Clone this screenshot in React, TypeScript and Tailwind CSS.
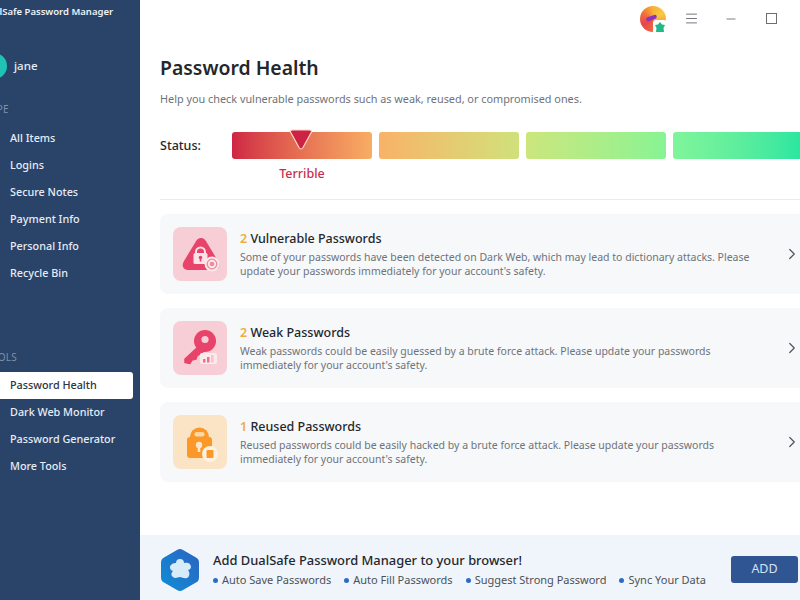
import { ChevronRight, Menu, Minus } from "lucide-react";

const typeItems = ["All Items", "Logins", "Secure Notes", "Payment Info", "Personal Info", "Recycle Bin"];
const toolItems = ["Password Health", "Dark Web Monitor", "Password Generator", "More Tools"];

function VulnerableIcon() {
  return (
    <svg width="54" height="54" viewBox="0 0 54 54">
      <path d="M28 11 C30.5 11 32 12.5 33.5 15 L45 34 C48 39.5 45.5 43 40 43 L16 43 C10.5 43 8 39.5 11 34 L22.5 15 C24 12.5 25.5 11 28 11Z" fill="#e8436a" />
      <path d="M23 27 v-2 a4.5 4.5 0 0 1 9 0 v2" fill="none" stroke="#fbe3e7" strokeWidth="2" />
      <rect x="20.5" y="26" width="14" height="11" rx="1.5" fill="#fbe3e7" />
      <circle cx="27.5" cy="30.5" r="1.8" fill="#e8436a" />
      <rect x="26.7" y="31" width="1.6" height="3.5" fill="#e8436a" />
      <circle cx="39" cy="37" r="7.5" fill="#fbe9ec" />
      <circle cx="39" cy="37" r="4.8" fill="none" stroke="#ee8a9d" strokeWidth="1.3" />
      <circle cx="39" cy="37" r="2.3" fill="#ee8a9d" />
    </svg>
  );
}

function WeakIcon() {
  return (
    <svg width="54" height="54" viewBox="0 0 54 54">
      <circle cx="32" cy="20" r="11" fill="#e8436a" />
      <circle cx="32" cy="18.5" r="3.6" fill="#f8ced6" />
      <path d="M25 26 L12 38 L12 41.5 L17 42.5 L19 39 L23 38 L24 35 L31 30Z" fill="#e8436a" stroke="#e8436a" strokeWidth="1.5" strokeLinejoin="round" />
      <rect x="27" y="32" width="17" height="11" rx="2" fill="#fbe9ec" />
      <rect x="30" y="38" width="2.5" height="3.5" fill="#ee6f88" />
      <rect x="34" y="36" width="2.5" height="5.5" fill="#ee6f88" />
      <rect x="38" y="34" width="2.5" height="7.5" fill="#f6c3cd" />
    </svg>
  );
}

function ReusedIcon() {
  return (
    <svg width="54" height="54" viewBox="0 0 54 54">
      <path d="M17 24 v-2 a9.5 9.5 0 0 1 19 0 v2Z" fill="#fb9827" />
      <rect x="21.5" y="17" width="10" height="4.5" rx="2.2" fill="#fcd9a6" />
      <rect x="14" y="22" width="25" height="21" rx="3" fill="#fb9827" />
      <circle cx="26" cy="30" r="3.2" fill="#fde6c8" />
      <rect x="24.7" y="31" width="2.6" height="6" fill="#fde6c8" />
      <circle cx="37" cy="39" r="8" fill="#fdf1df" />
      <rect x="33.5" y="35" width="7" height="8" rx="1" fill="#fb9827" />
    </svg>
  );
}

const issues = [
  {
    count: "2",
    title: "Vulnerable Passwords",
    desc: "Some of your passwords have been detected on Dark Web, which may lead to dictionary attacks. Please update your passwords immediately for your account's safety.",
    tile: "bg-[#f8ced6]",
    icon: <VulnerableIcon />,
  },
  {
    count: "2",
    title: "Weak Passwords",
    desc: "Weak passwords could be easily guessed by a brute force attack. Please update your passwords immediately for your account's safety.",
    tile: "bg-[#f8ced6]",
    icon: <WeakIcon />,
  },
  {
    count: "1",
    title: "Reused Passwords",
    desc: "Reused passwords could be easily hacked by a brute force attack. Please update your passwords immediately for your account's safety.",
    tile: "bg-[#fbe3c6]",
    icon: <ReusedIcon />,
  },
];

const segments = [
  "bg-gradient-to-r from-[#cf2544] to-[#f8ad63]",
  "bg-gradient-to-r from-[#f8b267] to-[#cfe17b]",
  "bg-gradient-to-r from-[#cbe67d] to-[#86f493]",
  "bg-gradient-to-r from-[#80f59a] to-[#12e5a0]",
];

const perks = ["Auto Save Passwords", "Auto Fill Passwords", "Suggest Strong Password", "Sync Your Data"];

export default function App() {
  return (
    <div className="flex h-[600px] w-[800px] overflow-hidden bg-white font-['Noto_Sans','Open_Sans',sans-serif] text-[#24272c]">
      <aside className="flex w-[140px] shrink-0 flex-col overflow-hidden bg-[#2a4368] text-[#e6ecf5]">
        <div className="-ml-[19px] mt-[3px] whitespace-nowrap text-[9.5px] font-semibold leading-[18px] text-[#eef2f8]">DualSafe Password Manager</div>
        <div className="mt-[32px] flex h-[26px] items-center">
          <div className="-ml-[19px] h-[26px] w-[26px] rounded-full bg-[#1ec3b4]" />
          <span className="ml-[7px] text-[11.5px] font-medium leading-none">jane</span>
        </div>
        <div className="-ml-[15px] mt-[23px] text-[10px] leading-[14px] tracking-wide text-[#7f90aa]">TYPE</div>
        <nav className="mt-[9px] flex flex-col">
          {typeItems.map((item) => (
            <div key={item} className="flex h-[27px] items-center pl-[10px] text-[10.8px] font-medium">{item}</div>
          ))}
        </nav>
        <div className="-ml-[16px] mt-[63px] text-[10px] leading-[14px] tracking-wide text-[#7f90aa]">TOOLS</div>
        <nav className="mt-[8px] flex flex-col">
          {toolItems.map((item, i) => (
            <div
              key={item}
              className={
                i === 0
                  ? "mr-[7px] flex h-[27px] items-center rounded-r-[3px] bg-white pl-[10px] text-[10.8px] font-medium text-[#2b3442]"
                  : "flex h-[27px] items-center pl-[10px] text-[10.8px] font-medium"
              }
            >
              {item}
            </div>
          ))}
        </nav>
      </aside>

      <main className="flex min-w-0 flex-1 flex-col overflow-hidden">
        <div className="flex h-[37px] shrink-0 items-center justify-end">
          <div className="relative mr-[18px] mt-[1px] h-[26px] w-[26px] rounded-full bg-[conic-gradient(#f9b233,#f8c846,#f59a2e,#f0683a,#e8434f,#f0703a,#f9b233)]">
            <div className="absolute left-[6px] top-[10px] h-[4px] w-[11px] -rotate-[20deg] rounded-full bg-[#8a32c4]" />
            <div className="absolute -bottom-[2px] -right-[1px] flex h-[14px] w-[14px] items-center justify-center rounded-[3px] bg-white">
              <svg width="12" height="12" viewBox="0 0 12 12">
                <path d="M6 1 L8 3.5 L11 4 L9.5 7 L10 11 L2 11 L2.5 7 L1 4 L4 3.5Z" fill="#21b98b" />
              </svg>
            </div>
          </div>
          <Menu size={15} strokeWidth={1.5} className="mr-[25px] text-[#6b6f75]" />
          <Minus size={14} strokeWidth={1.5} className="mr-[28px] text-[#6b6f75]" />
          <div className="mr-[23px] h-[11px] w-[11px] border-[1.5px] border-[#6b6f75]" />
        </div>

        <div className="flex-1 pl-[20px]">
          <h1 className="mt-[17px] text-[19.4px] font-semibold leading-[28px] text-[#24272c]">Password Health</h1>
          <p className="mt-[8px] text-[10.85px] leading-[18px] text-[#6e737a]">Help you check vulnerable passwords such as weak, reused, or compromised ones.</p>

          <div className="mt-[24px] flex w-[700px] items-start">
            <div className="w-[72px] shrink-0 text-[12.5px] font-medium leading-[27px]">Status:</div>
            <div className="flex gap-[7px]">
              {segments.map((bg, i) => (
                <div key={bg} className={`relative h-[27px] w-[140px] shrink-0 rounded-[3px] ${bg}`}>
                  {i === 0 && (
                    <svg width="24" height="22" viewBox="0 0 24 22" className="absolute -top-[3px] left-[57px]">
                      <path d="M1.5 3 Q0.8 1 3.5 1 L20.5 1 Q23.2 1 22.5 3 L14 18.5 Q12 21.5 10 18.5Z" fill="#cc2243" stroke="#fbd9c6" strokeWidth="1.2" />
                    </svg>
                  )}
                </div>
              ))}
            </div>
          </div>
          <div className="ml-[72px] mt-[6px] w-[140px] text-center text-[12.5px] font-medium leading-[18px] text-[#c5304f]">Terrible</div>

          <div className="mt-[16px] h-px w-[640px] bg-[#e9ebee]" />

          <div className="mt-[14px] flex w-[640px] flex-col gap-[14px]">
            {issues.map((it) => (
              <div key={it.title} className="flex h-[80px] items-center rounded-l-[8px] bg-[#f6f8fa] pl-[13px]">
                <div className={`flex h-[54px] w-[54px] shrink-0 items-center justify-center rounded-[8px] ${it.tile}`}>{it.icon}</div>
                <div className="ml-[13px] w-[525px] shrink-0">
                  <div className="-mt-[1px] text-[12.5px] font-medium leading-[18px] text-[#24272c]">
                    <span className="font-semibold text-[#f0ad3c]">{it.count}</span> {it.title}
                  </div>
                  <p className="mt-[2px] text-[10.5px] leading-[14px] text-[#6e737a]">{it.desc}</p>
                </div>
                <ChevronRight size={18} strokeWidth={1.6} className="ml-[18px] shrink-0 text-[#4f555d]" />
              </div>
            ))}
          </div>
        </div>

        <div className="flex h-[65px] shrink-0 items-center bg-[#f0f5fc] pl-[20px] pt-[4px]">
          <svg width="40" height="44" viewBox="0 0 40 44" className="shrink-0">
            <defs>
              <linearGradient id="hex" x1="0" y1="1" x2="1" y2="0">
                <stop offset="0" stopColor="#0f8fd6" />
                <stop offset="1" stopColor="#2c62c0" />
              </linearGradient>
            </defs>
            <path d="M17 2 Q20 0 23 2 L36 9.5 Q39 11 39 14.5 L39 29.5 Q39 33 36 34.5 L23 42 Q20 44 17 42 L4 34.5 Q1 33 1 29.5 L1 14.5 Q1 11 4 9.5Z" fill="url(#hex)" />
            <path d="M20 11 C23 11 24 13 24 15 C27 14 31 15 31 19 C31 21 29 22 28 22 C30 24 30 29 27 30 C24 31 22 29 20 29 C18 29 15 31 13 29 C10 27 12 24 13 23 C10 22 9 19 11 17 C13 15 15 15 16 15 C16 13 17 11 20 11Z" fill="#d8ebf9" />
          </svg>
          <div className="ml-[13px] min-w-0">
            <div className="text-[12.9px] font-medium leading-[18px] text-[#24272c]">Add DualSafe Password Manager to your browser!</div>
            <div className="mt-[3px] flex text-[11px] leading-[16px] text-[#4c5158]">
              {perks.map((p) => (
                <span key={p} className="mr-[13px] flex items-center whitespace-nowrap">
                  <span className="mr-[4px] h-[5px] w-[5px] rounded-full bg-[#2e6bc6]" />
                  {p}
                </span>
              ))}
            </div>
          </div>
          <button className="ml-auto mr-[2px] flex h-[27px] w-[67px] items-center justify-center rounded-[3px] bg-[#2f5592] text-[12.5px] text-[#d6e2f3]">ADD</button>
        </div>
      </main>
    </div>
  );
}
